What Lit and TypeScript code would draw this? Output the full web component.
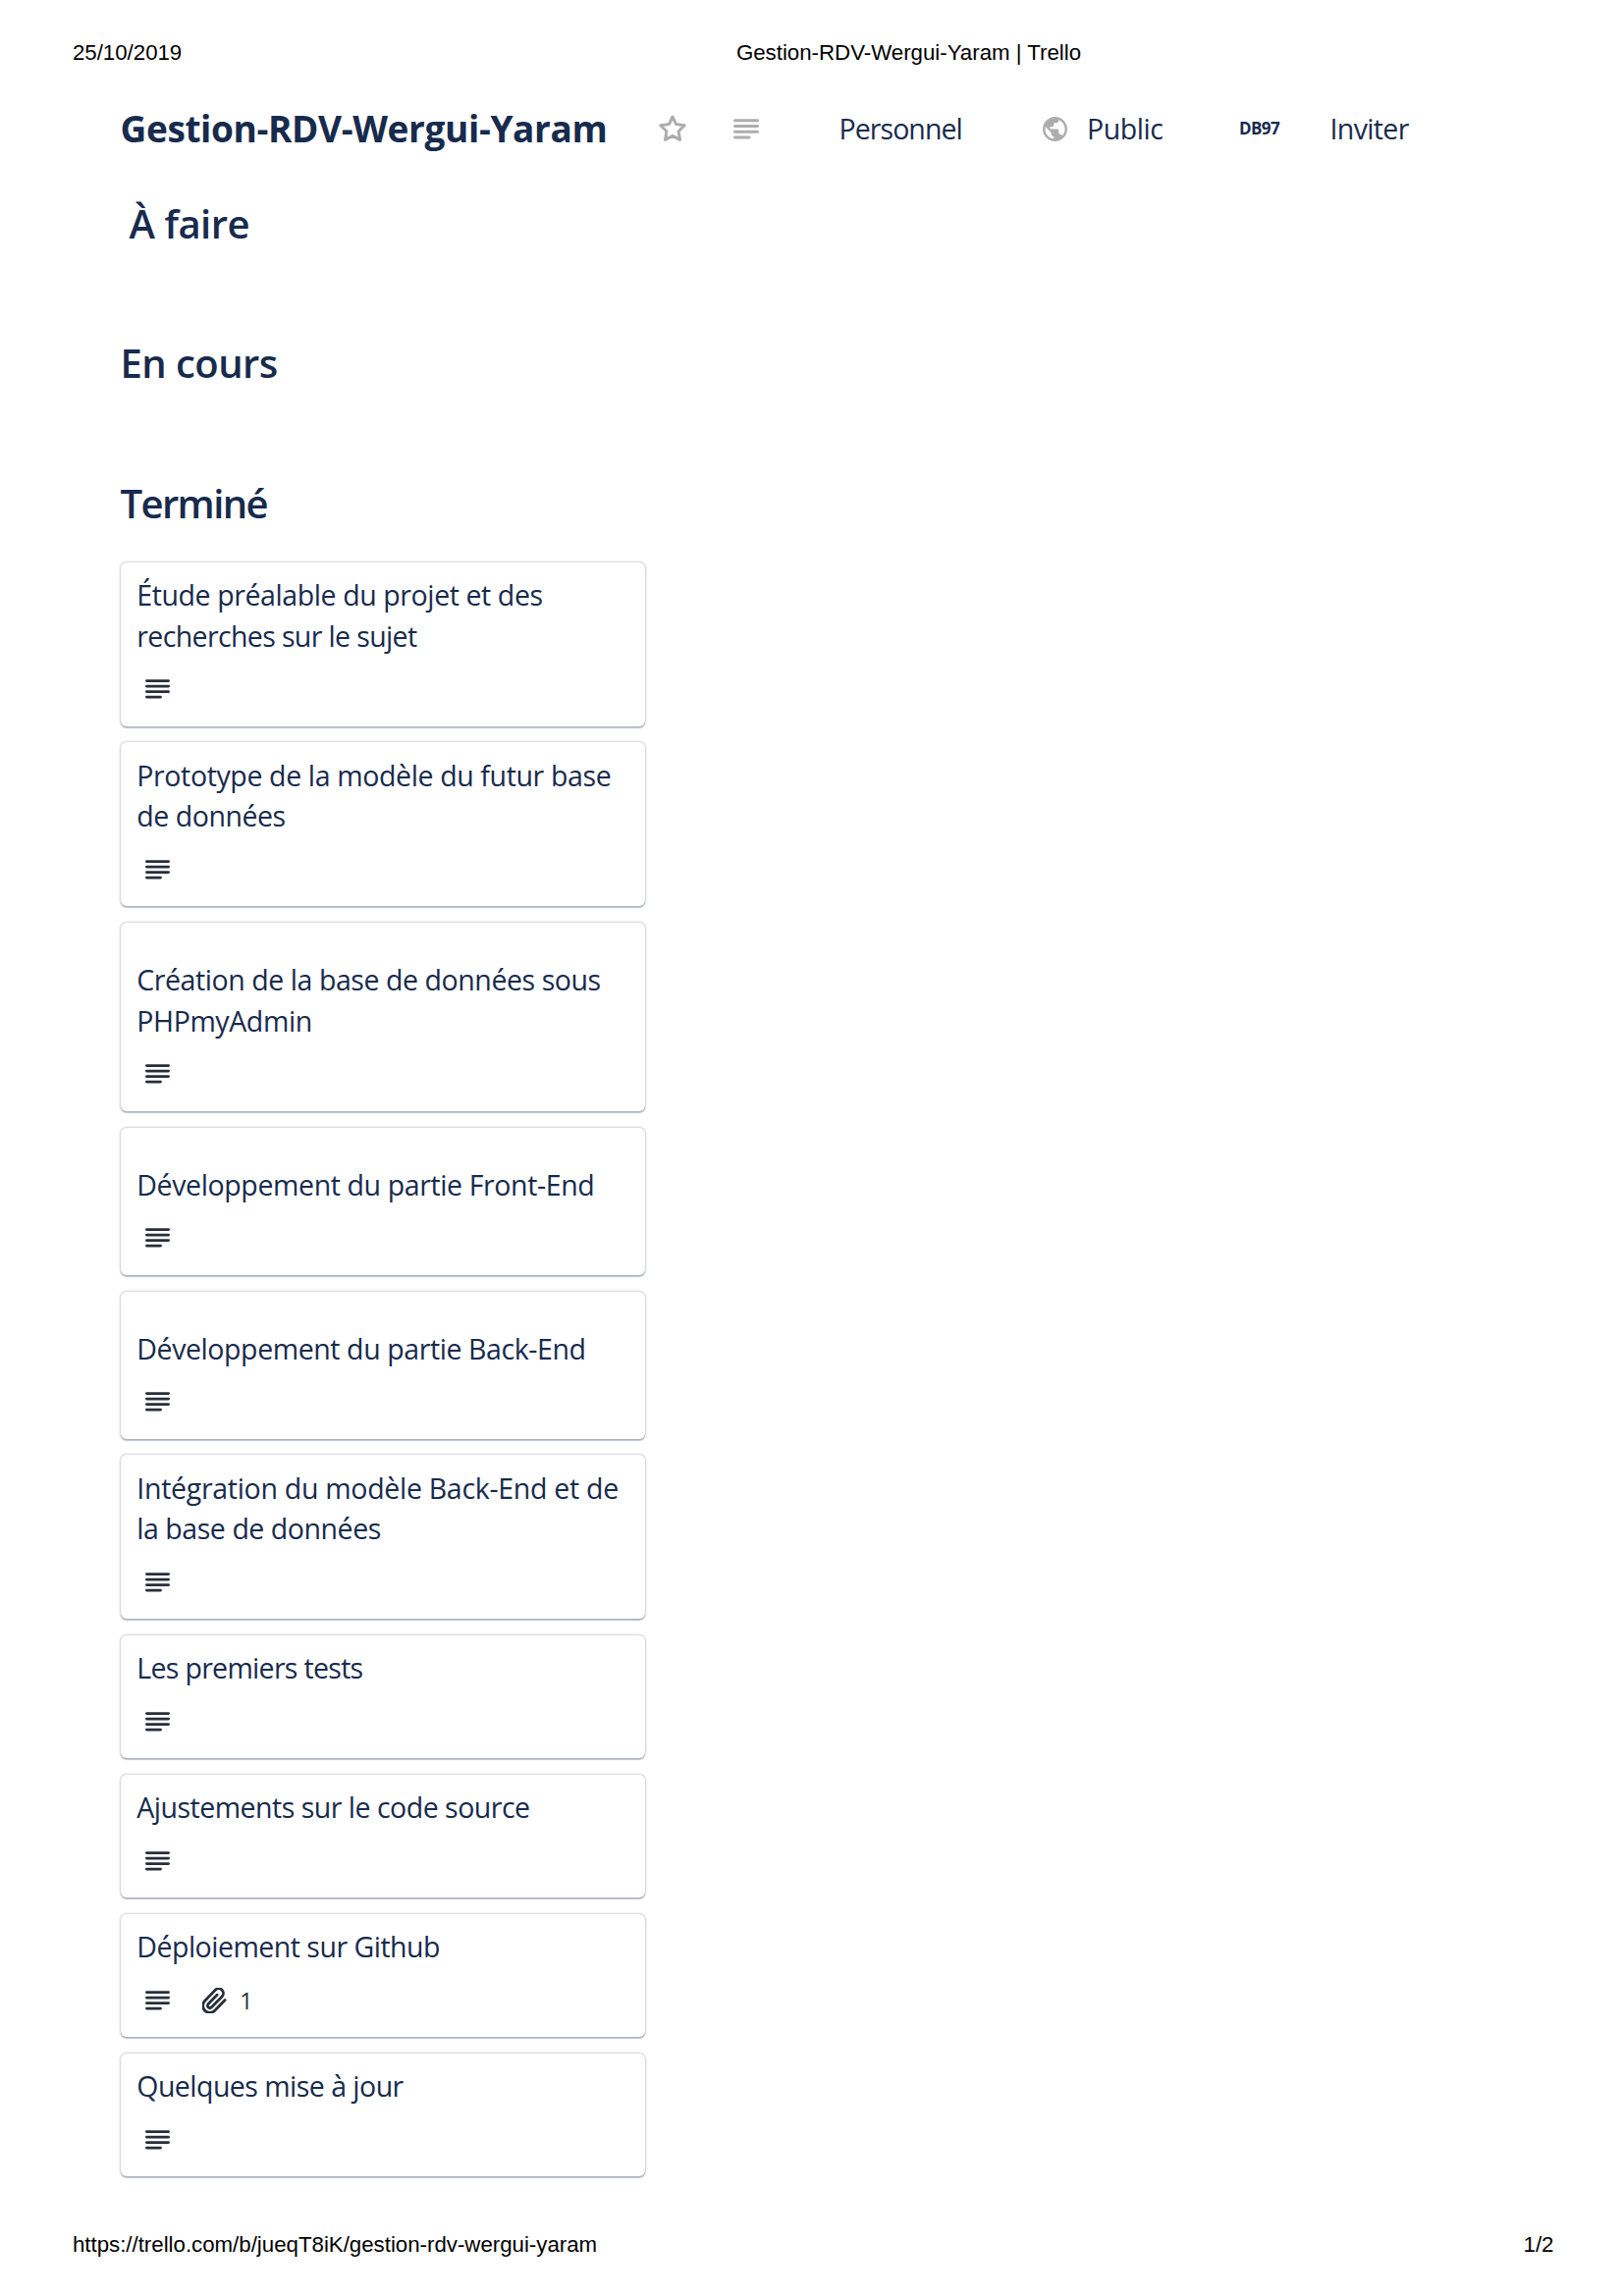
import { LitElement, html, css, svg } from "lit";
import { customElement, property } from "lit/decorators.js";

/** A run of text with its own tracking, in px. */
interface Line {
  text: string;
  track: number;
}

interface Card {
  lines: Line[];
  spaced?: boolean;
  attachments?: number;
}

const line = (text: string, track: number): Line => ({ text, track });

const cards: Card[] = [
  { lines: [line("Étude préalable du projet et des", -0.4), line("recherches sur le sujet", -0.63)] },
  { lines: [line("Prototype de la modèle du futur base", -0.37), line("de données", -0.46)] },
  { lines: [line("Création de la base de données sous", -0.43), line("PHPmyAdmin", -0.4)], spaced: true },
  { lines: [line("Développement du partie Front-End", -0.38)], spaced: true },
  { lines: [line("Développement du partie Back-End", -0.41)], spaced: true },
  { lines: [line("Intégration du modèle Back-End et de", -0.29), line("la base de données", -0.45)] },
  { lines: [line("Les premiers tests", -0.69)] },
  { lines: [line("Ajustements sur le code source", -0.5)] },
  { lines: [line("Déploiement sur Github", -0.5)], attachments: 1 },
  { lines: [line("Quelques mise à jour", -0.53)] },
];

const linesShape = svg`<path d="M1.4 1.6H23.6M1.4 7.1H23.6M1.4 12.6H23.6M1.4 18.1H15.5"
  fill="none" stroke="currentColor" stroke-width="2.8" stroke-linecap="round"/>`;

@customElement("tracked-text")
class TrackedText extends LitElement {
  @property({ attribute: false }) line!: Line;
  static styles = css`
    :host { display: block; white-space: nowrap; }
  `;
  render() {
    return html`<span style="letter-spacing:${this.line.track}px">${this.line.text}</span>`;
  }
}

@customElement("board-card")
class BoardCard extends LitElement {
  @property({ attribute: false }) card!: Card;
  static styles = css`
    :host { display: block; }
    .card {
      box-sizing: border-box;
      padding: 13.2px 16.3px 16.75px;
      background: #fff;
      border-radius: 6px;
      box-shadow: 0 1.5px 1px rgba(9, 30, 66, 0.22), 0 0 2px 1px rgba(9, 30, 66, 0.2);
      color: #172b4d;
      font-size: 28.5px;
      line-height: 41.73px;
    }
    .spaced { padding-top: 38.2px; }
    .badges {
      display: flex;
      align-items: center;
      height: 41.73px;
      margin-top: 11.9px;
      padding-left: 8.6px;
      color: #282e3a;
    }
    .desc { width: 25px; height: 20px; }
    .clip { width: 25px; height: 26px; margin-left: 33px; }
    .count { margin-left: 13px; font-size: 24px; color: #2b2f3a; }
  `;
  render() {
    const { lines, spaced, attachments } = this.card;
    return html`<div class="card ${spaced ? "spaced" : ""}">
      ${lines.map((l) => html`<tracked-text .line=${l}></tracked-text>`)}
      <div class="badges">
        <svg class="desc" viewBox="0 0 25 20">${linesShape}</svg>
        ${attachments
          ? html`<svg class="clip" viewBox="1.5 0.6 21.4 22.2">
                <path d="M21.3 11.3l-8.9 9.2a6 6 0 0 1-8.6-8.6l9.1-9.4a4 4 0 0 1 5.8 5.7l-9.1 9.3a2 2 0 0 1-2.9-2.8l7.7-7.9"
                  fill="none" stroke="currentColor" stroke-width="2.4" stroke-linecap="round" stroke-linejoin="round"/>
              </svg>
              <span class="count">${attachments}</span>`
          : null}
      </div>
    </div>`;
  }
}

@customElement("app-root")
class AppRoot extends LitElement {
  static styles = css`
    :host { display: block; }
    .page {
      box-sizing: border-box;
      display: flex;
      flex-direction: column;
      width: 1654px;
      height: 2339px;
      padding: 40.6px 71.5px 39.1px 73.9px;
      background: #fff;
      font-family: "Open Sans", "Noto Sans", sans-serif;
      color: #172b4d;
      overflow: hidden;
    }
    .print {
      display: flex;
      font: 22.25px/26px "Liberation Sans", Arial, sans-serif;
      color: #000;
    }
    .doc { margin-left: 564.7px; }
    .foot { justify-content: space-between; margin-top: auto; }
    .bar {
      display: grid;
      grid-template-columns: 549px 76px 107px 206px 46.5px 155px 92.5px auto;
      align-items: center;
      height: 60px;
      margin: 34.6px 0 37px 48.6px;
      font-size: 28.5px;
      line-height: 42px;
    }
    .icon { display: block; color: #adadad; }
    .star { width: 28px; height: 28px; }
    .desc { width: 26px; height: 21px; }
    .globe { width: 25px; height: 25px; margin-left: 1.3px; }
    .name { margin: 0; font-size: 37px; font-weight: 700; }
    .member { font-size: 17px; font-weight: 700; }
    .list { height: 142.2px; margin-left: 48.6px; }
    .title { margin: 0; font-size: 40px; font-weight: 600; line-height: 60px; }
    .indent { padding-left: 9px; }
    .cards {
      display: flex;
      flex-direction: column;
      gap: 16.65px;
      width: 534px;
      margin-top: 30.1px;
      padding-left: 0.5px;
    }
  `;
  render() {
    return html`<div class="page">
      <div class="print">
        <span>25/10/2019</span>
        <span class="doc">Gestion-RDV-Wergui-Yaram | Trello</span>
      </div>
      <header class="bar">
        <h1 class="name"><tracked-text .line=${line("Gestion-RDV-Wergui-Yaram", -0.38)}></tracked-text></h1>
        <svg class="icon star" viewBox="0 0 28 28">
          <path d="M14 2l3.6 7.6 8.6 1.2-6.1 6 1.4 8.6-7.5-4-7.5 4 1.4-8.6-6.1-6 8.6-1.2z"
            fill="none" stroke="currentColor" stroke-width="3" stroke-linejoin="round"/>
        </svg>
        <svg class="icon desc" viewBox="0 0 25 20">${linesShape}</svg>
        <tracked-text .line=${line("Personnel", -0.93)}></tracked-text>
        <svg class="icon globe" viewBox="2 2 20 20">
          <path fill="currentColor" d="M12 2C6.48 2 2 6.48 2 12s4.48 10 10 10 10-4.48 10-10S17.52 2 12 2zm-1 17.93c-3.95-.49-7-3.85-7-7.93 0-.62.08-1.21.21-1.79L9 15v1c0 1.1.9 2 2 2v1.93zm6.9-2.54c-.26-.81-1-1.39-1.9-1.39h-1v-3c0-.55-.45-1-1-1H8v-2h2c.55 0 1-.45 1-1V7h2c1.1 0 2-.9 2-2v-.41c2.93 1.19 5 4.06 5 7.41 0 2.08-.8 3.97-2.1 5.39z"/>
        </svg>
        <tracked-text .line=${line("Public", -0.45)}></tracked-text>
        <tracked-text class="member" .line=${line("DB97", -0.57)}></tracked-text>
        <tracked-text .line=${line("Inviter", -0.64)}></tracked-text>
      </header>
      <section class="list">
        <h2 class="title indent"><tracked-text .line=${line("À faire", -0.47)}></tracked-text></h2>
      </section>
      <section class="list">
        <h2 class="title"><tracked-text .line=${line("En cours", -0.53)}></tracked-text></h2>
      </section>
      <section class="list">
        <h2 class="title"><tracked-text .line=${line("Terminé", -1.6)}></tracked-text></h2>
        <div class="cards">${cards.map((c) => html`<board-card .card=${c}></board-card>`)}</div>
      </section>
      <div class="print foot">
        <span>https://trello.com/b/jueqT8iK/gestion-rdv-wergui-yaram</span>
        <span>1/2</span>
      </div>
    </div>`;
  }
}
